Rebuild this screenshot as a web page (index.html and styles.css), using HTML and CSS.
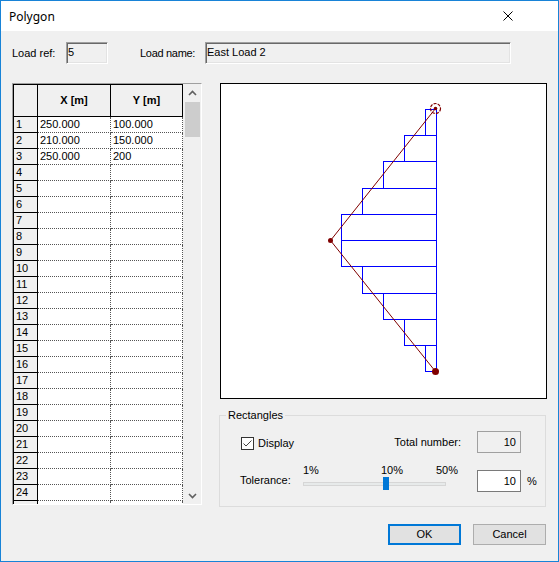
FILE: index.html
```html
<!DOCTYPE html>
<html>
<head>
<meta charset="utf-8">
<title>Polygon</title>
<link rel="stylesheet" href="styles.css">
</head>
<body>
<div class="window">
  <div class="titlebar">
    <span class="title">Polygon</span>
    <svg class="close" width="10" height="10" viewBox="0 0 10 10"><path d="M0.5 0.5 L9.5 9.5 M9.5 0.5 L0.5 9.5" stroke="#000" stroke-width="1" fill="none"/></svg>
  </div>
  <div class="content">
    <div class="fields">
      <span class="lbl lbl-ref">Load ref:</span>
      <div class="field field-ref">5</div>
      <span class="lbl lbl-name">Load name:</span>
      <div class="field field-name">East Load 2</div>
    </div>
    <div class="main">
      <div class="gridframe">
        <div class="grid">
          <div class="hc"></div><div class="hc">X [m]</div><div class="hc">Y [m]</div>
          <div class="rn">1</div><div class="dc">250.000</div><div class="dc">100.000</div>
          <div class="rn">2</div><div class="dc">210.000</div><div class="dc">150.000</div>
          <div class="rn">3</div><div class="dc">250.000</div><div class="dc">200</div>
          <div class="rn">4</div><div class="dc"></div><div class="dc"></div>
          <div class="rn">5</div><div class="dc"></div><div class="dc"></div>
          <div class="rn">6</div><div class="dc"></div><div class="dc"></div>
          <div class="rn">7</div><div class="dc"></div><div class="dc"></div>
          <div class="rn">8</div><div class="dc"></div><div class="dc"></div>
          <div class="rn">9</div><div class="dc"></div><div class="dc"></div>
          <div class="rn">10</div><div class="dc"></div><div class="dc"></div>
          <div class="rn">11</div><div class="dc"></div><div class="dc"></div>
          <div class="rn">12</div><div class="dc"></div><div class="dc"></div>
          <div class="rn">13</div><div class="dc"></div><div class="dc"></div>
          <div class="rn">14</div><div class="dc"></div><div class="dc"></div>
          <div class="rn">15</div><div class="dc"></div><div class="dc"></div>
          <div class="rn">16</div><div class="dc"></div><div class="dc"></div>
          <div class="rn">17</div><div class="dc"></div><div class="dc"></div>
          <div class="rn">18</div><div class="dc"></div><div class="dc"></div>
          <div class="rn">19</div><div class="dc"></div><div class="dc"></div>
          <div class="rn">20</div><div class="dc"></div><div class="dc"></div>
          <div class="rn">21</div><div class="dc"></div><div class="dc"></div>
          <div class="rn">22</div><div class="dc"></div><div class="dc"></div>
          <div class="rn">23</div><div class="dc"></div><div class="dc"></div>
          <div class="rn">24</div><div class="dc"></div><div class="dc"></div>
          <div class="rn"></div><div class="dc"></div><div class="dc"></div>
        </div>
        <div class="scrollbar">
          <div class="sb-btn"><svg width="9" height="6" viewBox="0 0 9 6"><path d="M1 5 L4.5 1.5 L8 5" stroke="#606060" stroke-width="1.6" fill="none"/></svg></div>
          <div class="sb-track"><div class="sb-thumb"></div></div>
          <div class="sb-btn"><svg width="9" height="6" viewBox="0 0 9 6"><path d="M1 1 L4.5 4.5 L8 1" stroke="#606060" stroke-width="1.6" fill="none"/></svg></div>
        </div>
      </div>
      <div class="right">
        <div class="diagram">
          <svg class="plot" width="325" height="314" viewBox="221 84 325 314">
            <g fill="none" stroke="#0000ff" stroke-width="1" shape-rendering="crispEdges">
              <rect x="425.5" y="109.5" width="11" height="26"/>
              <rect x="404.5" y="135.5" width="32" height="26"/>
              <rect x="383.5" y="161.5" width="53" height="27"/>
              <rect x="362.5" y="188.5" width="74" height="26"/>
              <rect x="341.5" y="214.5" width="95" height="26"/>
              <rect x="341.5" y="240.5" width="95" height="26"/>
              <rect x="362.5" y="266.5" width="74" height="27"/>
              <rect x="383.5" y="293.5" width="53" height="26"/>
              <rect x="404.5" y="319.5" width="32" height="26"/>
              <rect x="425.5" y="345.5" width="11" height="26"/>
            </g>
            <polyline points="435.5,108.5 330.5,240.5 435.5,371.5" fill="none" stroke="#800000" stroke-width="1"/>
            <circle cx="435.5" cy="108.5" r="5" fill="none" stroke="#800000" stroke-width="1.2" stroke-dasharray="3 1.2"/>
            <circle cx="435.5" cy="108.5" r="1.8" fill="#800000"/>
            <circle cx="330.5" cy="240.5" r="2.5" fill="#800000"/>
            <circle cx="435.5" cy="371.5" r="3.5" fill="#800000"/>
          </svg>
        </div>
        <fieldset class="group">
          <legend>Rectangles</legend>
          <div class="row row-a">
            <div class="chk-wrap">
              <span class="chk"><svg width="11" height="11" viewBox="0 0 11 11"><path d="M1.5 5.5 L4 8 L9.5 2.5" stroke="#444" stroke-width="1" fill="none"/></svg></span>
              <span class="chk-lbl">Display</span>
            </div>
            <div class="total-lbl">Total number:</div>
            <div class="gap"></div>
            <div class="box box-ro">10</div>
          </div>
          <div class="row row-b">
            <div class="tol-lbl">Tolerance:</div>
            <div class="slider">
              <div class="slider-labels"><span>1%</span><span>10%</span><span>50%</span></div>
              <div class="track"><div class="thumb"></div></div>
            </div>
            <div class="gap"></div>
            <div class="box box-in">10</div>
            <div class="gap"></div>
            <div class="pct">%</div>
          </div>
        </fieldset>
      </div>
    </div>
    <div class="buttons">
      <div class="btn btn-default">OK</div>
      <div class="btn">Cancel</div>
    </div>
  </div>
</div>
</body>
</html>
```
FILE: styles.css
```css
* { box-sizing: border-box; }
html, body { margin: 0; padding: 0; }
body {
  font-family: "Liberation Sans", Arial, sans-serif;
  font-size: 11px;
  color: #000;
  background: #fff;
}
.window {
  width: 559px;
  height: 562px;
  border: 1px solid #1883d7;
  background: #f0f0f0;
  display: flex;
  flex-direction: column;
}
.titlebar {
  height: 30px;
  flex: none;
  background: #fff;
  display: flex;
  align-items: center;
  justify-content: space-between;
  padding: 0 45px 0 8px;
}
.title {
  font-family: "Noto Sans", "Open Sans", sans-serif;
  font-size: 12px;
}
.close { display: block; margin-top: -1px; }
.content {
  flex: 1;
  padding: 11px 11px 0 11px;
}
.fields {
  display: flex;
  align-items: center;
  height: 22px;
}
.lbl { white-space: nowrap; }
.lbl-ref { width: 54px; }
.lbl-name { width: 65px; margin-left: 32px; letter-spacing: -0.3px; }
.field {
  height: 22px;
  line-height: 19px;
  padding-left: 1px;
  border: 1px solid;
  border-color: #a0a0a0 #fff #fff #a0a0a0;
  box-shadow: inset 1px 1px 0 #696969, inset -1px -1px 0 #e3e3e3;
  background: #f0f0f0;
  white-space: nowrap;
}
.field-ref { width: 42px; }
.field-name { width: 306px; }
.main {
  display: flex;
  margin-top: 19px;
  height: 424px;
}
.gridframe {
  width: 190px;
  height: 422px;
  border: 1px solid;
  border-color: #a0a0a0 #fff #fff #a0a0a0;
  display: flex;
  flex: none;
}
.grid {
  width: 170px;
  height: 420px;
  overflow: hidden;
  display: grid;
  grid-template-columns: 24px 73px 72px;
  grid-template-rows: 32px;
  grid-auto-rows: 16px;
  align-content: start;
  border-top: 1px solid #000;
  border-left: 1px solid #000;
  background: #fff;
}
.hc {
  background: #f0f0f0;
  border-right: 1px solid #000;
  border-bottom: 1px solid #000;
  font-weight: bold;
  text-align: center;
  line-height: 31px;
}
.rn {
  background: #f0f0f0;
  border-right: 1px solid #000;
  border-bottom: 1px solid #000;
  padding-left: 2px;
  line-height: 15px;
}
.dc {
  background: #fff;
  border-right: 1px dotted #555;
  border-bottom: 1px dotted #555;
  padding-left: 2px;
  line-height: 15px;
}
.scrollbar {
  width: 18px;
  height: 420px;
  display: flex;
  flex-direction: column;
  background: #f0f0f0;
}
.sb-btn {
  height: 17px;
  display: flex;
  align-items: center;
  justify-content: center;
  flex: none;
}
.sb-btn svg { display: block; }
.sb-track { flex: 1; padding-top: 1px; }
.sb-thumb {
  width: 15px;
  height: 35px;
  margin-left: 2px;
  background: #cdcdcd;
}
.right {
  margin-left: 18px;
  width: 327px;
  display: flex;
  flex-direction: column;
}
.diagram {
  height: 316px;
  border: 1px solid #000;
  background: #fff;
  flex: none;
}
.plot { display: block; }
.group {
  margin: 10px 0 0 -1px;
  width: 327px;
  min-width: 0;
  padding: 0 0 14px 0;
  border: 1px solid #dcdcdc;
}
.group legend {
  margin-left: 6px;
  padding: 0 2px;
  line-height: 13px;
  font-size: 11px;
}
.row {
  display: grid;
  grid-template-columns: 63px 158px 16px 44px 6px auto;
  padding-left: 20px;
}
.row-a {
  margin-top: 9px;
  height: 22px;
  align-items: center;
}
.chk-wrap {
  display: flex;
  align-items: center;
  white-space: nowrap;
  margin-top: 2px;
}
.chk {
  width: 13px;
  height: 13px;
  margin-left: 1px;
  border: 1px solid #333;
  background: #fff;
  flex: none;
}
.chk svg { display: block; }
.chk-lbl { margin-left: 4px; }
.total-lbl {
  text-align: right;
  white-space: nowrap;
}
.box {
  height: 22px;
  line-height: 20px;
  text-align: right;
  padding-right: 4px;
}
.box-ro {
  background: #f0f0f0;
  border: 1px solid #a0a0a0;
}
.box-in {
  background: #fff;
  border: 1px solid #7a7a7a;
  margin-top: 6px;
}
.row-b {
  margin-top: 11px;
  height: 28px;
  align-items: start;
}
.tol-lbl {
  margin-top: 10px;
  line-height: 13px;
  white-space: nowrap;
}
.slider-labels {
  display: grid;
  grid-template-columns: 78px 55px auto;
  line-height: 13px;
  height: 13px;
  white-space: nowrap;
}
.track {
  position: relative;
  margin-top: 5px;
  width: 143px;
  height: 4px;
  background: #e7eaea;
  border: 1px solid #d6d6d6;
}
.thumb {
  position: absolute;
  left: 79px;
  top: -6px;
  width: 6px;
  height: 13px;
  background: #0078d7;
}
.pct {
  margin-top: 11px;
  line-height: 13px;
}
.buttons {
  display: flex;
  justify-content: flex-end;
  gap: 12px;
  margin-top: 17px;
  padding-right: 1px;
}
.btn {
  width: 73px;
  height: 21px;
  border: 1px solid #adadad;
  background: #e1e1e1;
  text-align: center;
  line-height: 19px;
}
.btn-default {
  border: 2px solid #0078d7;
  line-height: 17px;
}
```
